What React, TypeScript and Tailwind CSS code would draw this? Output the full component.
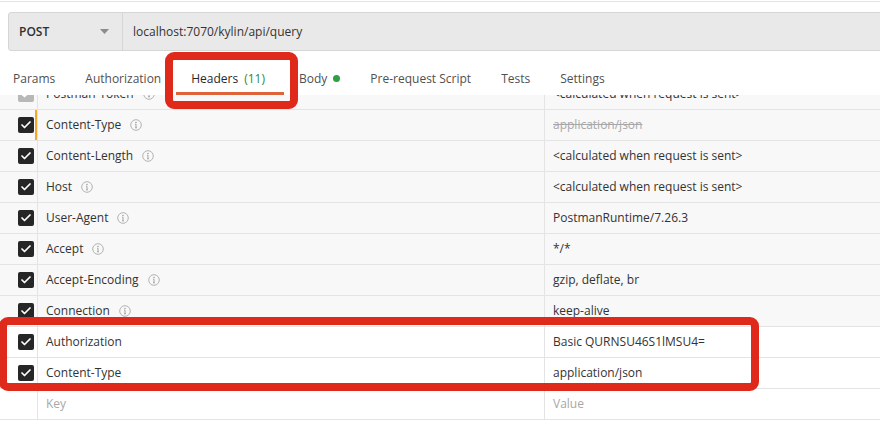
import { Check } from "lucide-react";

type Row = {
  key: string;
  value: string;
  auto: boolean;
  info: boolean;
  disabled?: boolean;
  struck?: boolean;
  modified?: boolean;
};

const rows: Row[] = [
  { key: "Postman-Token", value: "<calculated when request is sent>", auto: true, info: true, disabled: true },
  { key: "Content-Type", value: "application/json", auto: true, info: true, struck: true, modified: true },
  { key: "Content-Length", value: "<calculated when request is sent>", auto: true, info: true },
  { key: "Host", value: "<calculated when request is sent>", auto: true, info: true },
  { key: "User-Agent", value: "PostmanRuntime/7.26.3", auto: true, info: true },
  { key: "Accept", value: "*/*", auto: true, info: true },
  { key: "Accept-Encoding", value: "gzip, deflate, br", auto: true, info: true },
  { key: "Connection", value: "keep-alive", auto: true, info: true },
  { key: "Authorization", value: "Basic QURNSU46S1lMSU4=", auto: false, info: false },
  { key: "Content-Type", value: "application/json", auto: false, info: false },
];

const tabs = ["Params", "Authorization", "Headers", "Body", "Pre-request Script", "Tests", "Settings"];

function InfoIcon() {
  return (
    <svg width="12" height="12" viewBox="0 0 12 12" className="ml-[9px] shrink-0">
      <circle cx="6" cy="6" r="5.3" fill="none" stroke="#b3b3b3" strokeWidth="1" />
      <circle cx="6" cy="3.6" r="0.75" fill="#9a9a9a" />
      <path d="M6 5.2v3.6M5.1 8.8h1.8M5.2 5.2h0.8" stroke="#9a9a9a" strokeWidth="0.9" fill="none" />
    </svg>
  );
}

function Checkbox({ disabled }: { disabled?: boolean }) {
  return (
    <div
      className={`w-4 h-4 rounded-[2px] flex items-center justify-center ${disabled ? "bg-[#b8b8b8]" : "bg-[#262626]"}`}
    >
      <Check className="w-3 h-3 text-white" strokeWidth={3.5} />
    </div>
  );
}

export default function App() {
  return (
    <div
      className="relative w-[880px] h-[424px] overflow-hidden bg-white text-[12px] text-[#333]"
      style={{ fontFamily: '"Open Sans", "Liberation Sans", sans-serif' }}
    >
      <div className="h-[1px]" />
      <div className="h-[1px] bg-[#e4e4e4]" />
      <div className="h-[10px]" />

      {/* method + url */}
      <div className="ml-[8px] w-[900px] h-[39px] flex bg-[#e9e9e9] border border-[#d6d6d6] rounded-l-[3px]">
        <div className="w-[114px] shrink-0 flex items-center justify-between pl-[10px] pr-[13px] border-r border-[#d6d6d6]">
          <span className="font-semibold text-[#303030]">POST</span>
          <svg width="9" height="5" viewBox="0 0 9 5">
            <path d="M0 0h9L4.5 5z" fill="#8c8c8c" />
          </svg>
        </div>
        <div className="flex items-center pl-[10px] text-[#333]">localhost:7070/kylin/api/query</div>
      </div>

      {/* tabs */}
      <div className="relative z-10 h-[44px] bg-white flex items-stretch -ml-[2px]">
        {tabs.map((t) => {
          const active = t === "Headers";
          return (
            <div
              key={t}
              className={`relative flex items-center pt-[11px] ${active ? "pl-[15px] pr-[19px] text-[#282828]" : "px-[15px] text-[#505050]"}`}
            >
              <span>{t}</span>
              {active && <span className="ml-[6px] text-[#2b8a3e]">(11)</span>}
              {t === "Body" && <span className="ml-[6px] w-[7px] h-[7px] rounded-full bg-[#2f9e44]" />}
              {active && <div className="absolute left-0 right-0 bottom-0 h-[3px] bg-[#e0643a]" />}
            </div>
          );
        })}
      </div>

      {/* table */}
      <div className="relative h-[400px] overflow-hidden">
        <div className="-mt-[16px]">
          {rows.map((r, i) => (
            <div
              key={i}
              className={`h-[31px] flex border-b border-[#e4e4e4] ${r.auto ? "bg-[#f8f8f8]" : "bg-white"}`}
            >
              <div className="relative w-[38px] shrink-0 border-r border-[#e4e4e4] flex items-center pl-[18px]">
                <Checkbox disabled={r.disabled} />
                {r.modified && <div className="absolute right-[0px] top-0 bottom-0 w-[2px] bg-[#f0a92d]" />}
              </div>
              <div className="w-[507px] shrink-0 border-r border-[#e4e4e4] flex items-center pl-[8px]">
                <span>{r.key}</span>
                {r.info && <InfoIcon />}
              </div>
              <div className="flex-1 flex items-center pl-[8px]">
                <span className={r.struck ? "line-through text-[#a8a8a8]" : ""}>{r.value}</span>
              </div>
            </div>
          ))}
          <div className="h-[31px] flex border-b border-[#e4e4e4] bg-white text-[#a8a8a8]">
            <div className="w-[38px] shrink-0 border-r border-[#e4e4e4]" />
            <div className="w-[507px] shrink-0 border-r border-[#e4e4e4] flex items-center pl-[8px]">Key</div>
            <div className="flex-1 flex items-center pl-[8px]">Value</div>
          </div>
        </div>
      </div>

      {/* annotation boxes */}
      <div className="absolute z-20 left-[165px] top-[52px] w-[133px] h-[57px] border-[8px] border-[#df2a1b] rounded-[9px]" />
      <div className="absolute z-20 -left-[1px] top-[317px] w-[760px] h-[74px] border-[8px] border-[#df2a1b] rounded-[9px]" />
    </div>
  );
}
